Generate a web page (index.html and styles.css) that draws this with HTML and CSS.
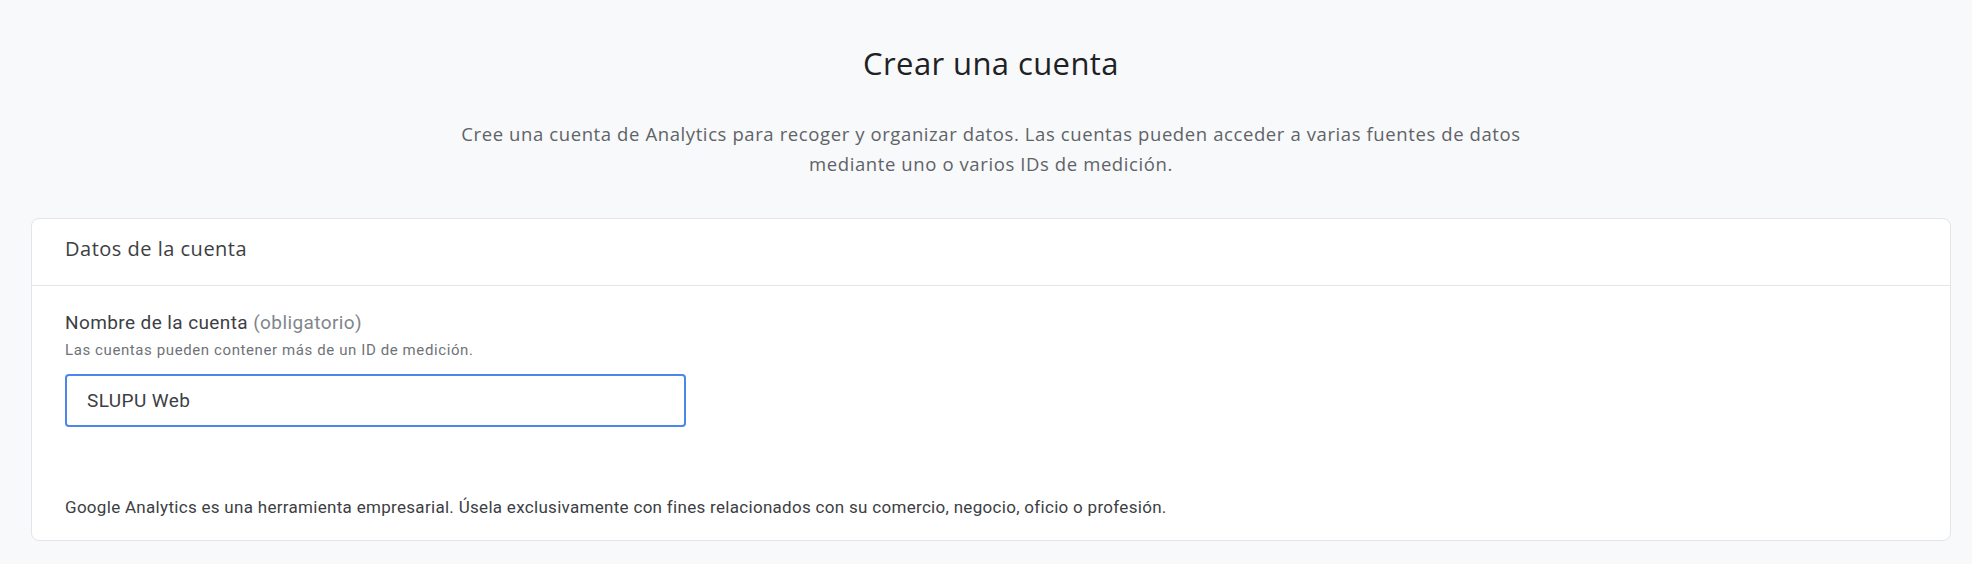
FILE: index.html
```html
<!DOCTYPE html>
<html lang="es">
<head>
<meta charset="utf-8">
<title>Crear una cuenta</title>
<link rel="stylesheet" href="styles.css">
</head>
<body>
<main class="page">
  <h1 class="title">Crear una cuenta</h1>
  <p class="intro">Cree una cuenta de Analytics para recoger y organizar datos. Las cuentas pueden acceder a varias fuentes de datos<br>mediante uno o varios IDs de medición.</p>
  <section class="card">
    <header class="card-header">
      <h2 class="card-title">Datos de la cuenta</h2>
    </header>
    <div class="card-body">
      <div class="field-label">Nombre de la cuenta <span class="optional">(obligatorio)</span></div>
      <p class="hint">Las cuentas pueden contener más de un ID de medición.</p>
      <div class="text-input">SLUPU Web</div>
      <p class="notice">Google Analytics es una herramienta empresarial. Úsela exclusivamente con fines relacionados con su comercio, negocio, oficio o profesión.</p>
    </div>
  </section>
</main>
</body>
</html>
```

FILE: styles.css
```css
html, body {
  margin: 0;
  padding: 0;
  background: #f8f9fa;
}

body {
  font-family: Roboto, "Liberation Sans", sans-serif;
  color: #3c4043;
}

.page {
  margin: 0 21px 0 31px;
  padding-top: 43px;
}

.title {
  margin: 0;
  text-align: center;
  font-family: "Open Sans", Roboto, sans-serif;
  font-weight: 400;
  font-size: 31px;
  letter-spacing: 0.4px;
  line-height: 40px;
  color: #202124;
}

.intro {
  margin: 36px 0 39px;
  text-align: center;
  font-family: "Open Sans", Roboto, sans-serif;
  font-size: 18.5px;
  letter-spacing: 0.6px;
  line-height: 30px;
  color: #5f6368;
}

.card {
  background: #ffffff;
  border: 1px solid #e3e5e8;
  border-radius: 8px;
}

.card-header {
  padding: 16px 33px 22px;
  border-bottom: 1px solid #e3e5e8;
}

.card-title {
  margin: 0;
  font-family: "Open Sans", Roboto, sans-serif;
  font-weight: 400;
  font-size: 20px;
  letter-spacing: 0.5px;
  line-height: 28px;
  color: #3c4043;
}

.card-body {
  padding: 25px 33px 21px;
}

.field-label {
  font-size: 19px;
  letter-spacing: 0.4px;
  line-height: 24px;
  color: #3c4043;
}

.optional {
  color: #80868b;
}

.hint {
  margin: 5px 0 0;
  font-size: 15px;
  letter-spacing: 0.6px;
  line-height: 20px;
  color: #6f7378;
}

.text-input {
  box-sizing: border-box;
  width: 621px;
  height: 53px;
  margin-top: 14px;
  padding: 0 20px;
  border: 2px solid #4a86ec;
  border-radius: 4px;
  font-size: 19px;
  letter-spacing: 0.4px;
  line-height: 49px;
  color: #3c4043;
}

.notice {
  margin: 68px 0 0;
  font-size: 17px;
  letter-spacing: 0.3px;
  line-height: 24px;
  color: #3c4043;
}
```
